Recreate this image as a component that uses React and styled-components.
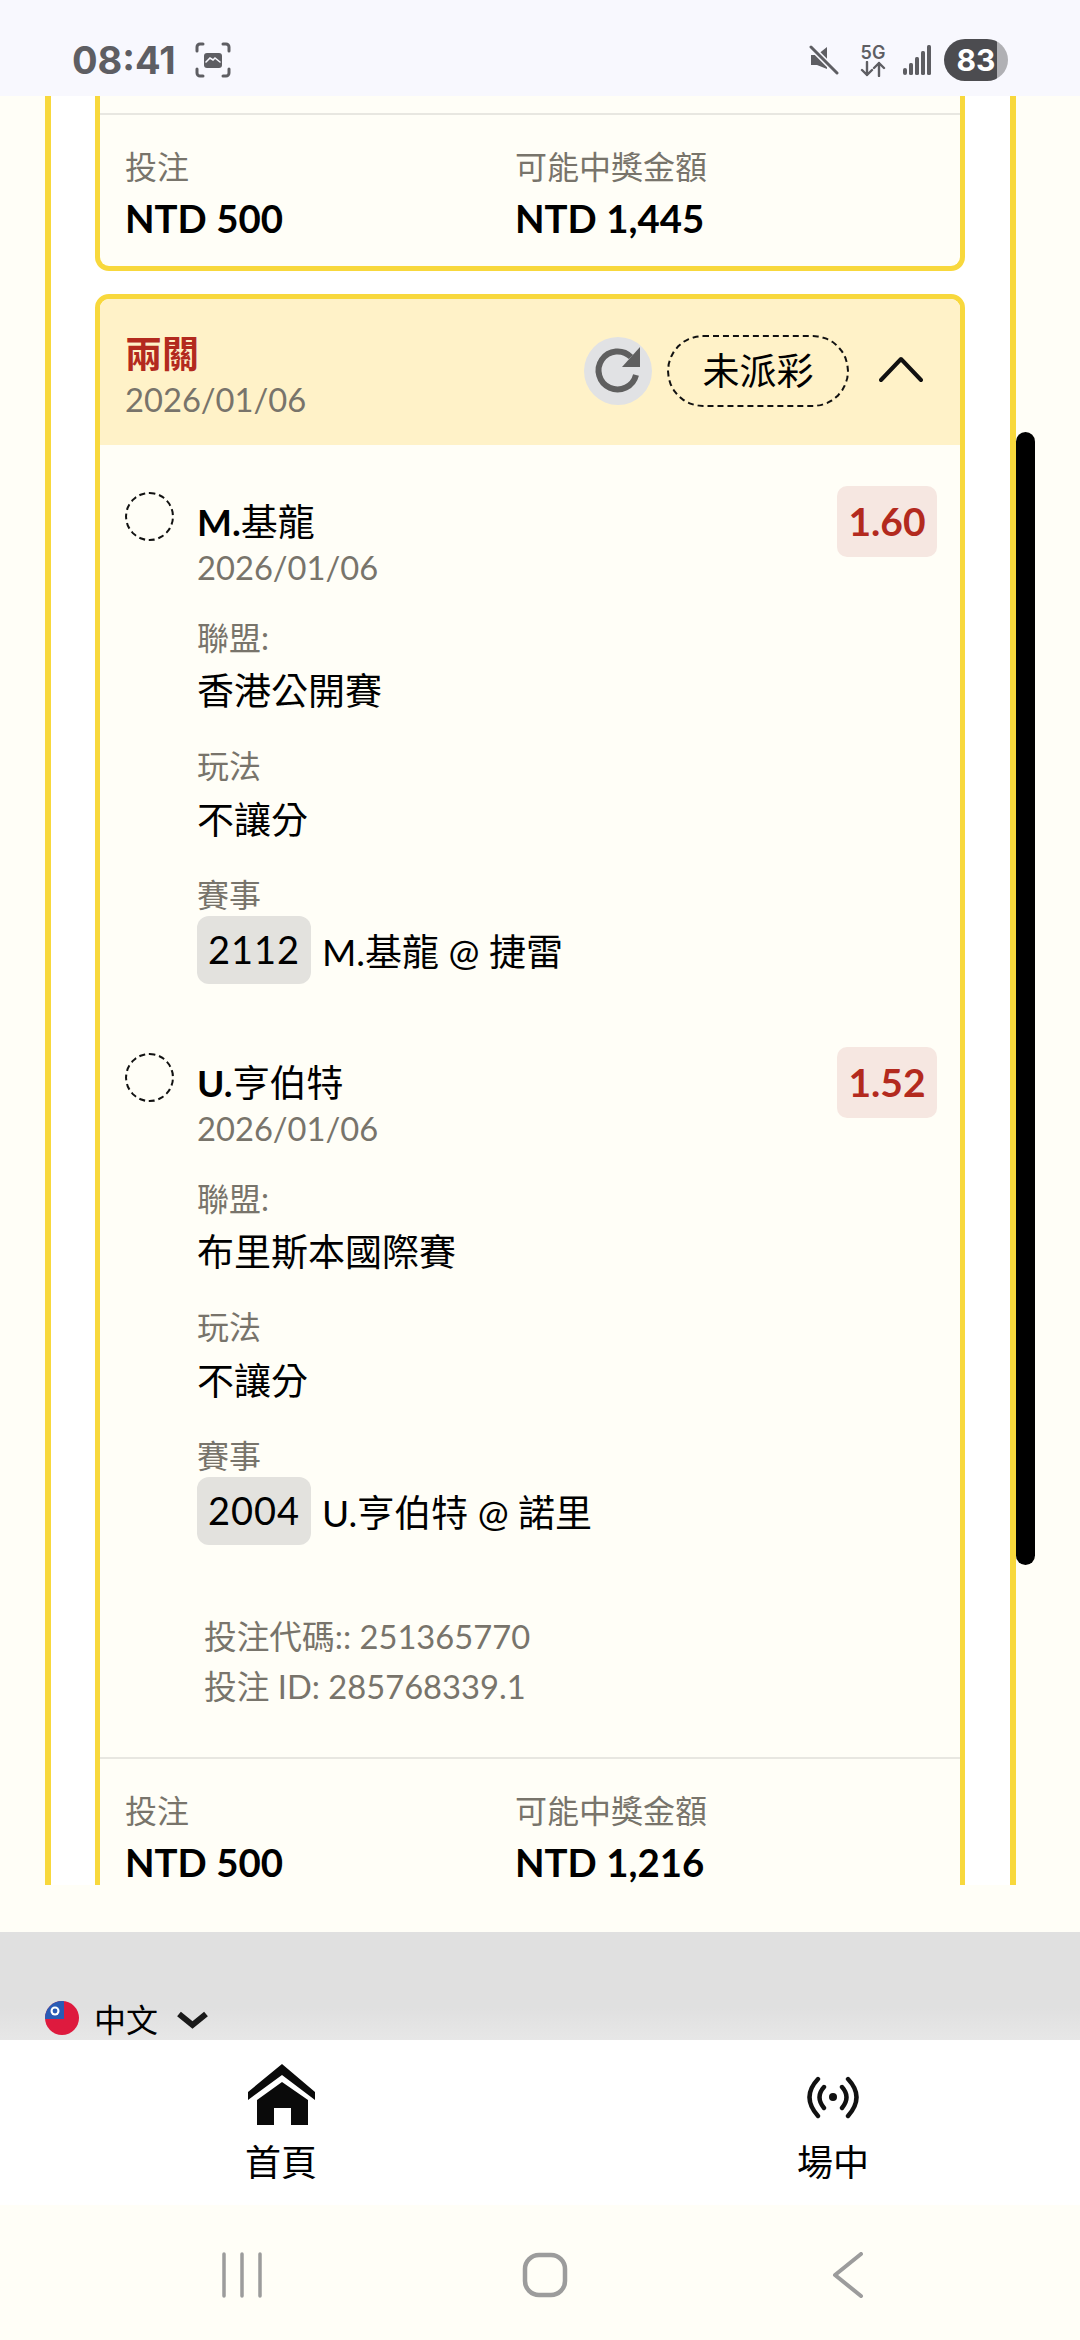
import React from 'react'
import styled, { createGlobalStyle } from 'styled-components'

const YELLOW = '#f8d83c'
const CREAM = '#fffef7'
const GREY_TEXT = '#78746b'
const RED = '#b32a1e'

const GlobalStyle = createGlobalStyle`
  html, body { margin: 0; padding: 0; background: ${CREAM}; }
  * { box-sizing: border-box; }
  body { font-family: Lato, "Noto Sans CJK TC", sans-serif; color: #000; }
`

const Page = styled.div`
  width: 1080px;
  height: 2340px;
  display: flex;
  flex-direction: column;
  overflow: hidden;
`

const StatusBar = styled.div`
  height: 96px;
  flex: none;
  background: #f8f8fe;
  padding: 24px 72px 0 72px;
  display: flex;
  align-items: center;
  justify-content: space-between;
  color: #5e5e63;
`
const StatusLeft = styled.div`
  display: flex;
  align-items: center;
  gap: 19px;
`
const Clock = styled.span`
  font-family: Inter, Roboto, sans-serif;
  font-weight: 700;
  font-size: 38px;
`
const StatusRight = styled.div`
  display: flex;
  align-items: center;
`
const NetBlock = styled.div`
  display: flex;
  flex-direction: column;
  align-items: center;
  width: 28px;
  margin: 0 16px 0 20px;
`
const NetLabel = styled.span`
  font-family: Inter, Roboto, sans-serif;
  font-weight: 600;
  font-size: 18px;
  line-height: 17px;
`
const Battery = styled.div`
  width: 64px;
  height: 42px;
  margin-left: 13px;
  border-radius: 21px;
  background: linear-gradient(90deg, #4c4c50 83%, #b0b0b4 83%);
  color: #fff;
  font-family: Inter, Roboto, sans-serif;
  font-weight: 700;
  font-size: 30px;
  line-height: 42px;
  text-align: center;
`

const ScrollArea = styled.div`
  position: relative;
  height: 1789px;
  flex: none;
  padding: 0 64px 0 45px;
  overflow: hidden;
  background: ${CREAM};
`
const Scrollbar = styled.div`
  position: absolute;
  left: 1016px;
  top: 336px;
  width: 19px;
  height: 1133px;
  border-radius: 10px;
  background: #000;
`
const OuterPanel = styled.div`
  border-left: 6px solid ${YELLOW};
  border-right: 6px solid ${YELLOW};
  background: #fff;
  padding: 0 45px 0 44px;
  display: flex;
  flex-direction: column;
  gap: 23px;
`
const Card = styled.div`
  background: ${CREAM};
  border: 5px solid ${YELLOW};
  border-radius: 14px;
  overflow: hidden;
  ${p => p.$cut && `
    border-top: 0;
    border-radius: 0 0 14px 14px;
    padding-top: 17px;
  `}
`
const CardHeader = styled.div`
  height: 146px;
  background: #fff2c8;
  padding: 0 37px 0 25px;
  display: flex;
  justify-content: space-between;
  align-items: flex-start;
`
const HeaderText = styled.div`
  padding-top: 33px;
`
const CardTitle = styled.div`
  font-size: 37px;
  line-height: 44px;
  font-weight: 700;
  color: ${RED};
`
const DateText = styled.div`
  font-size: 32.7px;
  line-height: 44px;
  margin-top: 2px;
  color: ${GREY_TEXT};
`
const HeaderActions = styled.div`
  display: flex;
  align-items: center;
  padding-top: 36px;
`
const RefreshButton = styled.div`
  width: 68px;
  height: 68px;
  border-radius: 50%;
  background: #e1e2e4;
`
const StatusPill = styled.div`
  width: 182px;
  height: 72px;
  margin-left: 15px;
  border: 2px dashed #111;
  border-radius: 36px;
  font-size: 37px;
  line-height: 68px;
  text-align: center;
`
const ChevronBox = styled.div`
  margin-left: 30px;
  height: 68px;
  padding-bottom: 4px;
  display: flex;
  align-items: center;
`
const CardBody = styled.div`
  padding: 41px 23px 0 25px;
`
const Leg = styled.div`
  display: grid;
  grid-template-columns: 49px 1fr;
  column-gap: 23px;
  margin-bottom: 63px;
  &:last-of-type { margin-bottom: 0; }
`
const DashedCircle = styled.div`
  width: 49px;
  height: 49px;
  margin-top: 6px;
  border: 2px dashed #111;
  border-radius: 50%;
`
const LegInfo = styled.div`
  position: relative;
  padding-top: 14px;
`
const Odds = styled.div`
  position: absolute;
  right: 0;
  top: 0;
  width: 100px;
  height: 71px;
  border-radius: 10px;
  background: #f6e7e1;
  color: ${RED};
  font-size: 39px;
  font-weight: 700;
  line-height: 71px;
  text-align: center;
`
const Name = styled.div`
  font-size: 37px;
  line-height: 44px;
  b { font-weight: 700; }
`
const Label = styled.div`
  font-size: 32px;
  line-height: 40px;
  color: ${GREY_TEXT};
  margin-top: ${p => p.$gap}px;
`
const Value = styled.div`
  font-size: 37px;
  line-height: 44px;
  margin-top: ${p => p.$gap}px;
`
const MatchRow = styled.div`
  display: flex;
  align-items: center;
  margin-top: 1px;
`
const MatchCode = styled.span`
  width: 114px;
  height: 68px;
  border-radius: 12px;
  background: #e3e2de;
  font-size: 38px;
  line-height: 66px;
  text-align: center;
  letter-spacing: 1px;
`
const MatchName = styled.span`
  font-size: 37px;
  margin-left: 11px;
`
const BetCodes = styled.div`
  margin-top: 67px;
  padding: 0 0 45px 79px;
  font-size: 32.7px;
  line-height: 50px;
  color: ${GREY_TEXT};
`
const Summary = styled.div`
  border-top: 2px solid #e8e7e1;
  display: grid;
  grid-template-columns: 390px 1fr;
  padding: 32px 25px 26px;
`
const SummaryLabel = styled.div`
  font-size: 32px;
  line-height: 40px;
  color: ${GREY_TEXT};
`
const SummaryValue = styled.div`
  font-size: 38.4px;
  font-weight: 700;
  line-height: 44px;
  margin-top: 9px;
`

const Spacer = styled.div`
  height: 47px;
  flex: none;
  background: ${CREAM};
`
const FooterBand = styled.div`
  height: 108px;
  flex: none;
  background: linear-gradient(180deg, #e0e0e0 70%, #e7e7e7 100%);
  padding: 0 45px 1px;
  display: flex;
  align-items: flex-end;
`
const LangPicker = styled.div`
  display: flex;
  align-items: center;
`
const LangText = styled.span`
  font-size: 32px;
  line-height: 36px;
  margin: 0 18px 0 15px;
`
const FlagSvg = styled.svg`
  margin-bottom: 4px;
`
const TabBar = styled.div`
  height: 165px;
  flex: none;
  background: #fff;
  padding-left: 221px;
  display: flex;
  gap: 432px;
`
const TabItem = styled.div`
  width: 120px;
  display: flex;
  flex-direction: column;
  align-items: center;
`
const TabIcon = styled.div`
  height: 85px;
  display: flex;
  align-items: flex-end;
  justify-content: center;
`
const TabLabel = styled.span`
  font-size: 36px;
  line-height: 44px;
  margin-top: 15px;
`
const SystemNav = styled.div`
  flex: 1;
  background: ${CREAM};
  padding: 47px 0 0 212px;
  display: flex;
  gap: 243px;
`
const SystemKey = styled.div`
  width: 60px;
  height: 46px;
  display: flex;
  justify-content: center;
`

const ScreenshotIcon = () => (
  <svg width="36" height="36" viewBox="0 0 36 36" fill="none" stroke="#5e5e63" strokeWidth="3" strokeLinecap="round">
    <path d="M8 2H5a3 3 0 0 0-3 3v4M28 2h3a3 3 0 0 1 3 3v4M8 34H5a3 3 0 0 1-3-3v-4M28 34h3a3 3 0 0 0 3-3v-4" />
    <rect x="9" y="11" width="18" height="15" rx="3" fill="#5e5e63" stroke="none" />
    <path d="M11 20l4-4 3 2 2-2 5 4" stroke="#f8f8fe" strokeWidth="1.6" />
  </svg>
)

const MuteIcon = () => (
  <svg width="30" height="30" viewBox="0 0 30 30" fill="#5e5e63">
    <path d="M2 10h6l10-8v22L8 20H2z" />
    <path d="M2 2l26 26" stroke="#f8f8fe" strokeWidth="6" />
    <path d="M2 2l26 26" stroke="#5e5e63" strokeWidth="3" strokeLinecap="round" />
  </svg>
)

const NetArrows = () => (
  <svg width="26" height="16" viewBox="0 0 26 16" fill="none" stroke="#5e5e63" strokeWidth="2.4" strokeLinecap="round" strokeLinejoin="round">
    <path d="M7 1v13M2 9l5 5 5-5M19 15V2M14 7l5-5 5 5" />
  </svg>
)

const SignalIcon = () => (
  <svg width="28" height="30" viewBox="0 0 28 30" fill="#5e5e63">
    <rect x="0" y="23" width="4" height="7" rx="2" />
    <rect x="6" y="18" width="4" height="12" rx="1.5" />
    <rect x="12" y="12" width="4" height="18" rx="1.5" />
    <rect x="18" y="6" width="4" height="24" rx="1.5" />
    <rect x="24" y="0" width="4" height="30" rx="1.5" />
  </svg>
)

const RefreshIcon = () => (
  <svg width="68" height="68" viewBox="0 0 68 68" fill="none">
    <path d="M47 20A19 19 0 1 0 52 38" stroke="#5f5f5f" strokeWidth="6" />
    <path d="M56 10v20H38z" fill="#5f5f5f" />
  </svg>
)

const ChevronUp = () => (
  <svg width="44" height="28" viewBox="0 0 44 28" fill="none" stroke="#111" strokeWidth="4" strokeLinecap="round" strokeLinejoin="round">
    <path d="M2 25L22 4l20 21" />
  </svg>
)

const FlagIcon = () => (
  <FlagSvg width="34" height="34" viewBox="0 0 34 34">
    <defs>
      <clipPath id="flagClip"><circle cx="17" cy="17" r="17" /></clipPath>
    </defs>
    <g clipPath="url(#flagClip)">
      <rect width="34" height="34" fill="#de1a3e" />
      <rect width="19" height="18" fill="#2a5bb5" />
      <circle cx="10" cy="10" r="4.5" fill="#fff" />
      <circle cx="10" cy="10" r="2.4" fill="#2a5bb5" />
    </g>
  </FlagSvg>
)

const LangChevron = () => (
  <svg width="33" height="18" viewBox="0 0 33 18" fill="none" stroke="#1a1a1a" strokeWidth="6">
    <path d="M3 3l13.5 11L30 3" />
  </svg>
)

const HomeIcon = () => (
  <svg width="67" height="61" viewBox="0 0 67 61" fill="#0a0a0a">
    <path d="M34 0L67 28v8L34 11 0 36v-8z" />
    <path d="M34 18l26 18v25H43V44H26v17H9V36z" />
  </svg>
)

const LiveIcon = () => (
  <svg width="52" height="49" viewBox="0 0 52 49" fill="none" stroke="#111" strokeWidth="4.4" strokeLinecap="round">
    <path d="M11 3Q-6 21 11 40M41 3q17 18 0 37M17 11q-9 10 0 21M35 11q9 10 0 21" />
    <circle cx="26" cy="21" r="4" fill="#111" stroke="none" />
  </svg>
)

const RecentKey = () => (
  <svg width="42" height="46" viewBox="0 0 42 46" fill="none" stroke="#9c9c9c" strokeWidth="3.5" strokeLinecap="round">
    <path d="M3 2v42M21 2v42M39 2v42" />
  </svg>
)

const HomeKey = () => (
  <svg width="46" height="46" viewBox="0 0 46 46" fill="none" stroke="#9c9c9c" strokeWidth="4.5">
    <rect x="3" y="3" width="40" height="40" rx="14" />
  </svg>
)

const BackKey = () => (
  <svg width="32" height="46" viewBox="0 0 32 46" fill="none" stroke="#9c9c9c" strokeWidth="4" strokeLinecap="round" strokeLinejoin="round">
    <path d="M29 2L3 23l26 21" />
  </svg>
)

const legs = [
  { bold: 'M.', rest: '基龍', odds: '1.60', league: '香港公開賽', code: '2112', match: 'M.基龍 @ 捷雷' },
  { bold: 'U.', rest: '亨伯特', odds: '1.52', league: '布里斯本國際賽', code: '2004', match: 'U.亨伯特 @ 諾里' },
]

const SummaryRow = ({ stake, payout }) => (
  <Summary>
    <div>
      <SummaryLabel>投注</SummaryLabel>
      <SummaryValue>{stake}</SummaryValue>
    </div>
    <div>
      <SummaryLabel>可能中獎金額</SummaryLabel>
      <SummaryValue>{payout}</SummaryValue>
    </div>
  </Summary>
)

export default function App() {
  return (
    <Page>
      <GlobalStyle />
      <StatusBar>
        <StatusLeft>
          <Clock>08:41</Clock>
          <ScreenshotIcon />
        </StatusLeft>
        <StatusRight>
          <MuteIcon />
          <NetBlock>
            <NetLabel>5G</NetLabel>
            <NetArrows />
          </NetBlock>
          <SignalIcon />
          <Battery>83</Battery>
        </StatusRight>
      </StatusBar>

      <ScrollArea>
        <OuterPanel>
          <Card $cut>
            <SummaryRow stake="NTD 500" payout="NTD 1,445" />
          </Card>
          <Card>
            <CardHeader>
              <HeaderText>
                <CardTitle>兩關</CardTitle>
                <DateText>2026/01/06</DateText>
              </HeaderText>
              <HeaderActions>
                <RefreshButton><RefreshIcon /></RefreshButton>
                <StatusPill>未派彩</StatusPill>
                <ChevronBox><ChevronUp /></ChevronBox>
              </HeaderActions>
            </CardHeader>
            <CardBody>
              {legs.map(leg => (
                <Leg key={leg.code}>
                  <DashedCircle />
                  <LegInfo>
                    <Odds>{leg.odds}</Odds>
                    <Name><b>{leg.bold}</b>{leg.rest}</Name>
                    <DateText>2026/01/06</DateText>
                    <Label $gap={28}>聯盟:</Label>
                    <Value $gap={11}>{leg.league}</Value>
                    <Label $gap={33}>玩法</Label>
                    <Value $gap={12}>不讓分</Value>
                    <Label $gap={33}>賽事</Label>
                    <MatchRow>
                      <MatchCode>{leg.code}</MatchCode>
                      <MatchName>{leg.match}</MatchName>
                    </MatchRow>
                  </LegInfo>
                </Leg>
              ))}
              <BetCodes>
                <div>投注代碼:: 251365770</div>
                <div>投注 ID: 285768339.1</div>
              </BetCodes>
            </CardBody>
            <SummaryRow stake="NTD 500" payout="NTD 1,216" />
          </Card>
        </OuterPanel>
        <Scrollbar />
      </ScrollArea>

      <Spacer />
      <FooterBand>
        <LangPicker>
          <FlagIcon />
          <LangText>中文</LangText>
          <LangChevron />
        </LangPicker>
      </FooterBand>

      <TabBar>
        <TabItem>
          <TabIcon><HomeIcon /></TabIcon>
          <TabLabel>首頁</TabLabel>
        </TabItem>
        <TabItem>
          <TabIcon><LiveIcon /></TabIcon>
          <TabLabel>場中</TabLabel>
        </TabItem>
      </TabBar>

      <SystemNav>
        <SystemKey><RecentKey /></SystemKey>
        <SystemKey><HomeKey /></SystemKey>
        <SystemKey><BackKey /></SystemKey>
      </SystemNav>
    </Page>
  )
}
